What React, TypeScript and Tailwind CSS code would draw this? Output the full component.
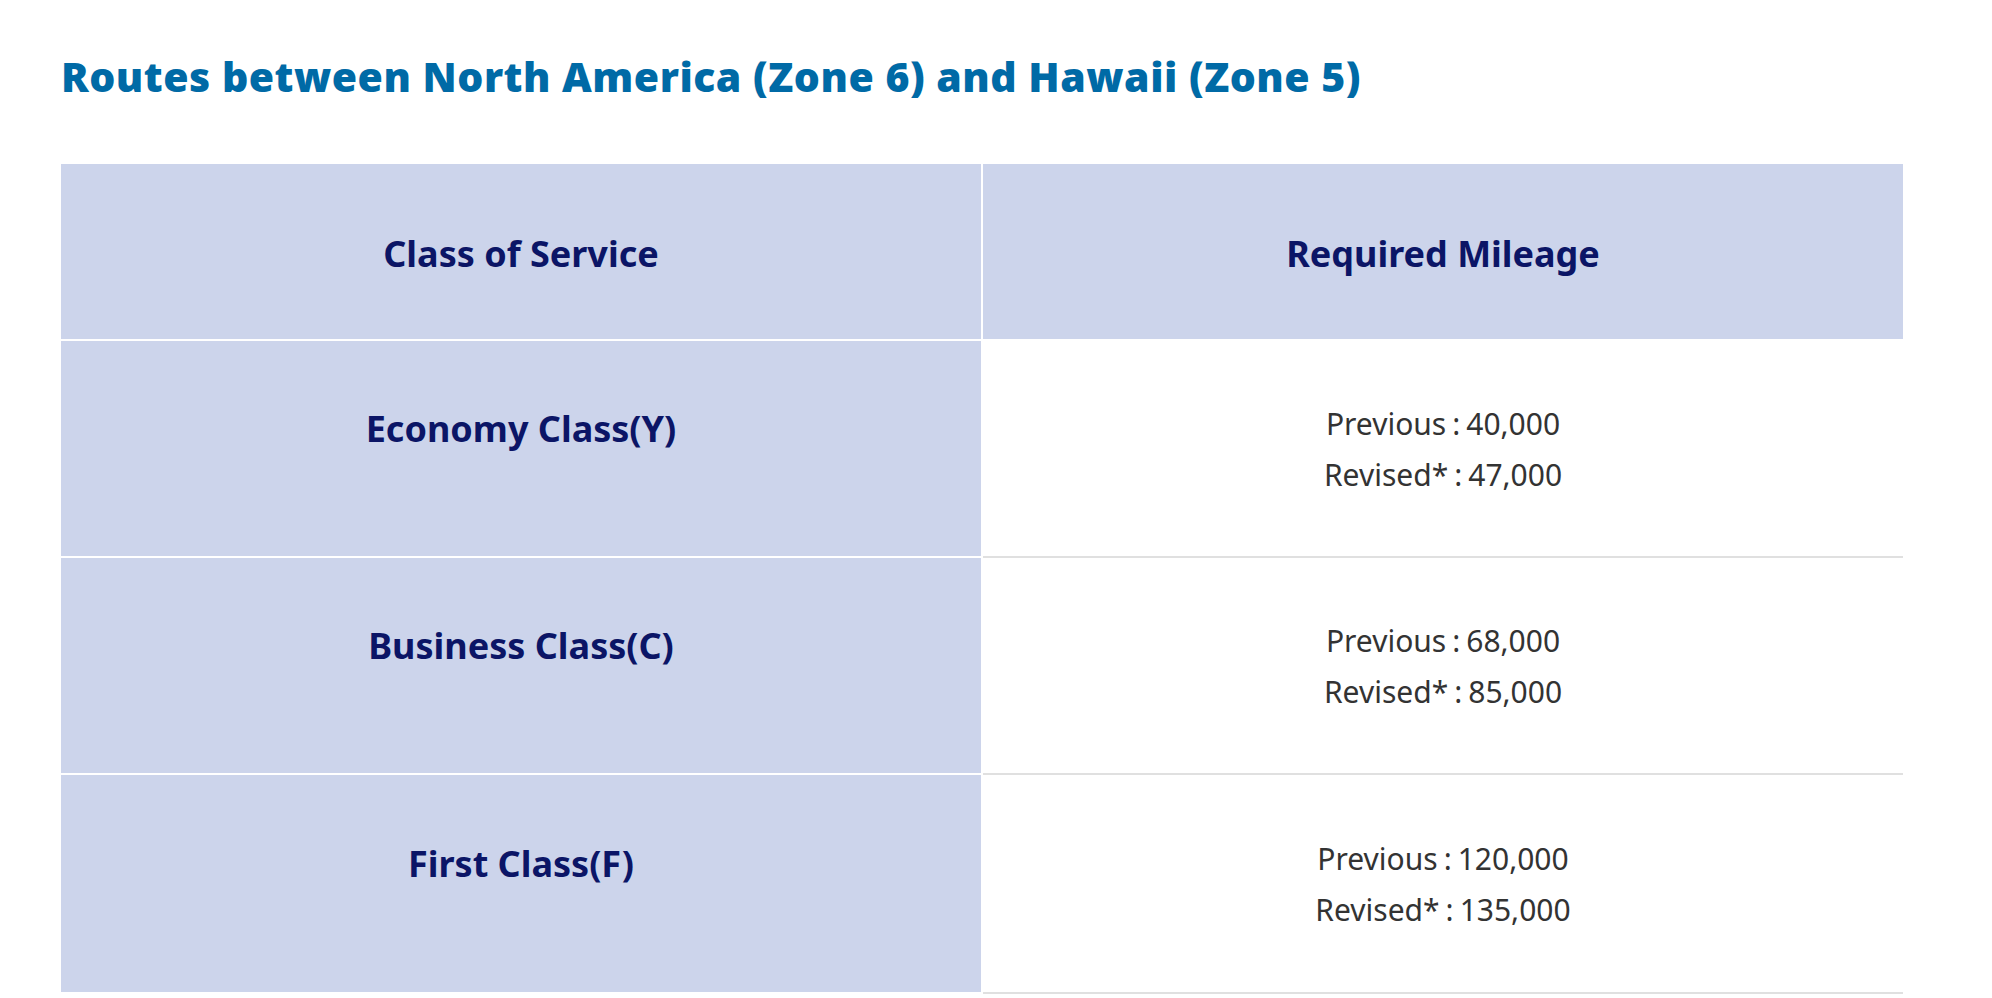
import React from "react";

interface FareRow {
  label: string;
  previous: string;
  revised: string;
}

const rows: FareRow[] = [
  { label: "Economy Class(Y)", previous: "40,000", revised: "47,000" },
  { label: "Business Class(C)", previous: "68,000", revised: "85,000" },
  { label: "First Class(F)", previous: "120,000", revised: "135,000" },
];

export default function App() {
  return (
    <div className="min-h-screen bg-white font-['Noto_Sans',sans-serif]">
      <section className="pl-[61px] pt-[52px]">
        {/* Titulo */}
        <h2 className="text-[41px] font-black leading-[48px] tracking-[0.5px] text-[#006aa6]">
          Routes between North America (Zone 6) and Hawaii (Zone 5)
        </h2>

        {/* Tabela */}
        <div className="mt-[64px] grid w-[1842px] grid-cols-[922px_920px]">
          <div className="flex h-[177px] items-center justify-center border-b-2 border-r-2 border-white bg-[#ccd4eb] pt-[5px] text-[36px] font-bold text-[#0b1566]">
            Class of Service
          </div>
          <div className="flex h-[177px] items-center justify-center border-b-2 border-white bg-[#ccd4eb] pt-[5px] text-[36px] font-bold text-[#0b1566]">
            Required Mileage
          </div>

          {rows.map((row, i) => (
            <React.Fragment key={row.label}>
              <div
                className={`flex items-center justify-center border-b-2 border-r-2 border-white bg-[#ccd4eb] pb-[40px] text-[36px] font-bold text-[#0b1566] ${
                  i === rows.length - 1 ? "h-[219px]" : "h-[217px]"
                }`}
              >
                {row.label}
              </div>
              <div
                className={`flex flex-col items-center justify-center border-b-2 border-[#e0e0e0] text-[30px] leading-[51px] text-[#333333] ${
                  i === rows.length - 1 ? "h-[219px]" : "h-[217px]"
                }`}
              >
                <p>
                  Previous<span className="mx-[6px]">:</span>
                  {row.previous}
                </p>
                <p>
                  Revised*<span className="mx-[6px]">:</span>
                  {row.revised}
                </p>
              </div>
            </React.Fragment>
          ))}
        </div>
      </section>
    </div>
  );
}
